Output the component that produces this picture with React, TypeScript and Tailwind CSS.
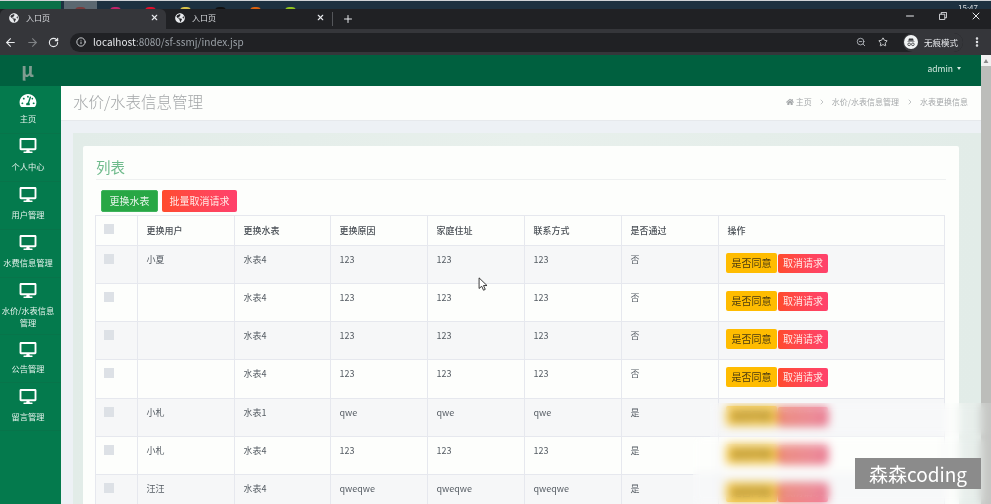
import React from "react";
import { FaDesktop, FaGlobeAmericas, FaHome, FaTachometerAlt } from "react-icons/fa";
import { ArrowLeft, ArrowRight, ChevronRight, Info, Minus, MoreVertical, Plus, RotateCw, Star, X, ZoomOut } from "lucide-react";

const cjk = "font-['Noto_Sans_CJK_SC','Noto_Sans',sans-serif]";

const menu = [
  { label: "主页", box: "h-[48px] pt-[7px]", gap: "mt-[4px]", dash: true },
  { label: "个人中心", box: "h-[48px] pt-[4px]", gap: "mt-[7px]" },
  { label: "用户管理", box: "h-[48px] pt-[5px]", gap: "mt-[6px]" },
  { label: "水费信息管理", box: "h-[48px] pt-[5px]", gap: "mt-[6px]" },
  { label: "水价/水表信息管理", box: "h-[57px] pt-[5px]", gap: "mt-[6px]" },
  { label: "公告管理", box: "h-[48px] pt-[7px]", gap: "mt-[5px]" },
  { label: "留言管理", box: "h-[48px] pt-[6px]", gap: "mt-[6px]" },
];

const rows = [
  ["小夏", "水表4", "123", "123", "123", "否"],
  ["", "水表4", "123", "123", "123", "否"],
  ["", "水表4", "123", "123", "123", "否"],
  ["", "水表4", "123", "123", "123", "否"],
  ["小札", "水表1", "qwe", "qwe", "qwe", "是"],
  ["小札", "水表4", "123", "123", "123", "是"],
  ["汪汪", "水表4", "qweqwe", "qweqwe", "qweqwe", "是"],
];

const heads = ["更换用户", "更换水表", "更换原因", "家庭住址", "联系方式", "是否通过", "操作"];
const dots = ["bg-[#7a3b3b]", "bg-[#c0246a]", "bg-[#e0102c]", "bg-[#d8c24a]", "bg-[#111111]", "bg-[#d9620f]", "bg-[#8fc31f]"];

function BrowserTab({ active }: { active?: boolean }) {
  return (
    <div className={`flex h-[20px] w-[166px] items-center pb-[3px] pl-[9px] pr-[7px] ${active ? "rounded-t-md bg-[#35363a]" : "bg-[#202124]"}`}>
      <FaGlobeAmericas className="h-[10px] w-[10px] text-[#e8eaed]" />
      <span className="ml-[7px] text-[8px] leading-none text-[#dadce0]">入口页</span>
      <X className="ml-auto h-[9px] w-[9px] text-[#e8eaed]" strokeWidth={3} />
    </div>
  );
}

function IncognitoIcon() {
  return (
    <svg viewBox="0 0 24 24" className="h-[14px] w-[14px]">
      <circle cx="12" cy="12" r="12" fill="#f1f3f4" />
      <path d="M6 11h12v1.2H6zM8.5 6h7l1.2 4H7.300z" fill="#35363a" />
      <circle cx="8.800" cy="16" r="2.300" fill="none" stroke="#35363a" strokeWidth="1.400" />
      <circle cx="15.200" cy="16" r="2.300" fill="none" stroke="#35363a" strokeWidth="1.400" />
    </svg>
  );
}

function Sidebar() {
  return (
    <aside className="flex w-[61px] shrink-0 flex-col bg-[#047a4d]">
      <div className="flex h-[31px] items-center justify-center bg-[#00603f] pb-[5px] pr-[6px] text-[19px] font-bold leading-none text-[#7f9c90]">μ</div>
      {menu.map((m) => (
        <div key={m.label} className={`flex ${m.box} flex-col items-center border-b border-[#08744a] pr-[5px] text-center`}>
          {m.dash ? (
            <FaTachometerAlt className="h-[15px] w-[18px] shrink-0 text-white" />
          ) : (
            <FaDesktop className="h-[15px] w-[18px] shrink-0 text-white" />
          )}
          <span className={`${m.gap} text-[8.250px] leading-[12px] text-[#e4f2ec]`}>{m.label}</span>
        </div>
      ))}
    </aside>
  );
}

function DataTable() {
  return (
    <table className="ml-[12px] w-[850px] table-fixed border-collapse text-[9px] text-[#555c63]">
      <colgroup>
        <col className="w-[42px]" />
        <col className="w-[97px]" />
        <col className="w-[96px]" />
        <col className="w-[97px]" />
        <col className="w-[97px]" />
        <col className="w-[97px]" />
        <col className="w-[97px]" />
        <col />
      </colgroup>
      <thead>
        <tr className="h-[30px]">
          <th className="border border-[#e6e8ee] align-top pl-[8px] pt-[8px]">
            <div className="h-[10px] w-[10px] bg-[#dde1e6]" />
          </th>
          {heads.map((h) => (
            <th key={h} className="border border-[#e6e8ee] pl-[8.500px] text-left font-medium text-[#4a5056]">{h}</th>
          ))}
        </tr>
      </thead>
      <tbody>
        {rows.map((r, i) => (
          <tr key={i} className={`${i === 3 ? "h-[39px]" : "h-[38px]"} ${i % 2 === 0 ? "bg-[#f6f7f8]" : "bg-[#fdfefc]"}`}>
            <td className="border border-[#e6e8ee] pl-[8px] pt-[8px] align-top">
              <div className="h-[10px] w-[10px] bg-[#dde1e6]" />
            </td>
            {r.map((c, j) => (
              <td key={j} className="border border-[#e6e8ee] pl-[8.500px] pt-[8px] align-top leading-[12px]">{c}</td>
            ))}
            <td className="border border-[#e6e8ee] pl-[7px] pt-[7px] align-top">
              <div className="flex items-center gap-[1px]">
                <button className="h-[20px] w-[51px] rounded-[2px] bg-[#ffbc00] text-[10px] leading-none text-[#4a3a10]">是否同意</button>
                <button className="h-[19px] w-[50px] rounded-[2px] bg-gradient-to-r from-[#ff4b2b] to-[#ff416c] text-[10px] leading-none text-[#ffe9e4]">取消请求</button>
              </div>
            </td>
          </tr>
        ))}
      </tbody>
    </table>
  );
}

export default function App() {
  return (
    <div className={`relative flex h-[504px] w-[991px] flex-col overflow-hidden bg-[#edf1f5] ${cjk}`}>
      {/* desktop behind the browser */}
      <div className="flex h-[9px] items-start overflow-hidden border-t border-[#cfd3d6] bg-[#1d3140]">
        <div className="h-[9px] w-[61px] bg-[#0a7048]" />
        <div className="ml-[3px] h-[9px] w-[33px] bg-[#5b6870]" />
        <div className="ml-[-22px] flex gap-[24px] pt-[6px]">
          {dots.map((d) => (
            <div key={d} className={`h-[4px] w-[11px] rounded-t-sm ${d}`} />
          ))}
        </div>
        <span className="ml-auto mr-[13px] text-[8px] leading-[14px] text-[#d8dde0]">15:47</span>
      </div>

      {/* tab strip */}
      <div className="flex h-[20px] items-center bg-[#202124]">
        <BrowserTab active />
        <BrowserTab />
        <div className="h-[14px] w-px bg-[#54565a]" />
        <Plus className="ml-[9px] h-[12px] w-[12px] text-[#e8eaed]" strokeWidth={2} />
        <div className="ml-auto flex items-center gap-[23px] pb-[7px] pr-[9px] text-[#e8eaed]">
          <Minus className="h-[12px] w-[12px]" />
          <svg viewBox="0 0 9 9" className="h-[8px] w-[8px]" fill="none" stroke="#e8eaed" strokeWidth="1">
            <path d="M.5 2.500h6v6h-6zM2.500 2.500v-2h6v6h-2" />
          </svg>
          <X className="h-[12px] w-[12px]" />
        </div>
      </div>

      {/* toolbar */}
      <div className="flex h-[26px] items-center bg-[#35363a] pl-[4px] pr-[8px] text-[#e8eaed]">
        <ArrowLeft className="h-[13px] w-[13px]" />
        <ArrowRight className="ml-[9px] h-[13px] w-[13px] text-[#7f8285]" />
        <RotateCw className="ml-[9px] h-[11px] w-[11px]" strokeWidth={2.500} />
        <div className="ml-[11px] flex h-[19px] flex-1 items-center rounded-full bg-[#202124] pl-[6px]">
          <Info className="h-[10px] w-[10px]" />
          <span className="ml-[7px] text-[10px] leading-none text-[#9aa0a6]">
            <span className="text-[#e8eaed]">localhost</span>:8080/sf-ssmj/index.jsp
          </span>
          <ZoomOut className="ml-auto h-[10px] w-[10px] text-[#bdc1c6]" />
          <Star className="ml-[12px] h-[10px] w-[10px]" />
          <div className="ml-[15px] flex h-[19px] w-[60px] items-center rounded-full bg-[#35363a] pl-[1px]">
            <IncognitoIcon />
            <span className="ml-[6px] text-[8.500px] leading-none text-[#e8eaed]">无痕模式</span>
          </div>
        </div>
        <MoreVertical className="ml-[8px] h-[12px] w-[12px]" strokeWidth={3} />
      </div>

      {/* page */}
      <div className="flex min-h-0 flex-1">
        <Sidebar />
        <main className="flex min-w-0 flex-1 flex-col">
          <div className="flex h-[31px] shrink-0 items-center justify-end bg-[#00603f] pb-[5px] pr-[20px] text-[8.500px] text-[#d7ebe2]">
            admin
            <span className="ml-[4px] h-0 w-0 border-x-[2.500px] border-t-[3px] border-x-transparent border-t-[#d7ebe2]" />
          </div>
          <div className="flex h-[35px] shrink-0 items-center border-b border-[#e6e9ec] bg-[#fdfefc] pb-[2px] pl-[12px] pr-[13px]">
            <h1 className="text-[15.500px] font-light leading-none text-[#a3a6a8]">水价/水表信息管理</h1>
            <div className="ml-auto flex items-center text-[8px] text-[#a5a8aa]">
              <FaHome className="mr-[2px] h-[8px] w-[8px]" />
              主页
              <ChevronRight className="mx-[6px] h-[8px] w-[8px]" />
              水价/水表信息管理
              <ChevronRight className="mx-[6.500px] h-[8px] w-[8px]" />
              水表更换信息
            </div>
          </div>
          <div className="min-h-0 flex-1 pl-[12px] pt-[12px]">
            <div className="h-full bg-gradient-to-r from-[#e2ece8] via-[#e8f0ec] to-[#e2ece8] pl-[10px] pr-[22px] pt-[13px]">
              <section className="h-[400px] rounded-t-[2px] bg-[#fdfefc] pt-[12px]">
                <div className="mx-[13px] h-[22px] border-b border-[#eef0f0] text-[14.500px] leading-[18px] text-[#6fbb8c]">列表</div>
                <div className="ml-[18px] mt-[10px] flex h-[22px] gap-[4px] text-[10px]">
                  <button className="w-[57px] rounded-[2px] border border-[#3fb35c] bg-[#28a745] leading-none text-[#e8f6ec]">更换水表</button>
                  <button className="w-[75px] rounded-[2px] bg-gradient-to-r from-[#ff4b2b] to-[#ff416c] leading-none text-[#ffe9e4]">批量取消请求</button>
                </div>
                <div className="h-[3px]" />
                <DataTable />
              </section>
            </div>
          </div>
        </main>
        <div className="flex w-[10px] shrink-0 flex-col bg-[#f1f1f1]">
          <div className="h-[11px] text-center text-[5px] leading-[11px] text-[#8a8a8a]">▲</div>
          <div className="flex-1 bg-[#bcbdba]" />
        </div>
      </div>

      {/* mouse cursor */}
      <svg viewBox="0 0 12 17" className="absolute left-[478px] top-[277px] h-[15px] w-[11px]">
        <path d="M1 1v12l3-2.500 2 4.500 2-1-2-4.300h4z" fill="#fff" stroke="#222" strokeWidth="1" />
      </svg>

      {/* blurred out patch and watermark */}
      <div className="absolute left-[710px] right-0 top-[403px] h-[34px] bg-white/15 backdrop-blur-[5px] backdrop-saturate-[.8]" />
      <div className="absolute bottom-0 left-[693px] right-0 top-[437px] bg-white/15 backdrop-blur-[5px] backdrop-saturate-[.8]" />
      <div className="absolute left-[855px] top-[458px] flex h-[31px] w-[126px] items-center justify-center bg-[#8b8b8b] text-[19px] leading-none text-white">森森coding</div>
    </div>
  );
}
